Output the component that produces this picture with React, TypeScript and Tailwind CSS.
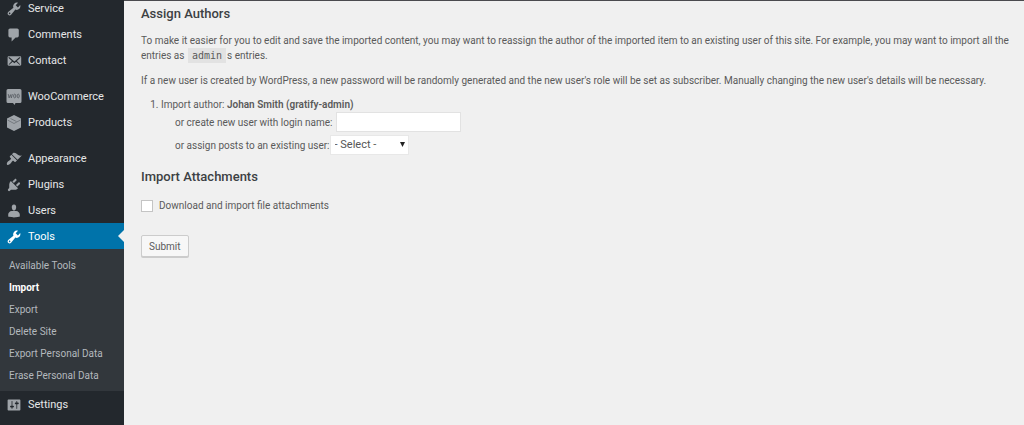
import React from 'react';

interface MenuItem {
  label: string;
  icon: React.ReactNode;
  active?: boolean;
}

const Dashicon: React.FC<{ d: string }> = ({ d }) => (
  <svg viewBox="0 0 20 20" className="size-4 shrink-0 fill-current" aria-hidden="true">
    <path d={d} />
  </svg>
);

const TOOLS =
  'M16.68 9.77c-1.34 1.34-3.3 1.67-4.95.99l-5.41 6.52c-.99.99-2.59.99-3.58 0s-.99-2.59 0-3.57l6.52-5.42c-.68-1.65-.35-3.61.99-4.95 1.28-1.28 3.12-1.62 4.72-1.06l-2.89 2.89 2.82 2.82 2.86-2.87c.53 1.58.18 3.39-1.08 4.65zM3.81 16.21c.4.39 1.04.39 1.43 0 .4-.4.4-1.04 0-1.43-.39-.4-1.03-.4-1.43 0-.39.39-.39 1.03 0 1.43z';
const COMMENTS =
  'M5 2h9c1.1 0 2 .9 2 2v7c0 1.1-.9 2-2 2h-2l-5 5v-5H5c-1.1 0-2-.9-2-2V4c0-1.1.9-2 2-2z';
const EMAIL =
  'M19 14.5v-9c0-.83-.67-1.5-1.5-1.5H3.49c-.83 0-1.5.67-1.5 1.5v9c0 .83.67 1.5 1.5 1.5H17.5c.83 0 1.5-.67 1.5-1.5zm-1.31-9.11c.33.33.15.67-.03.84L13.6 9.95l3.9 4.06c.12.14.2.36.06.51-.13.16-.43.15-.56.05l-4.37-3.73-2.14 1.95-2.13-1.95-4.37 3.73c-.13.1-.43.11-.56-.05-.14-.15-.06-.37.06-.51l3.9-4.06-4.06-3.72c-.18-.17-.36-.51-.03-.84s.67-.17.95.07l6.24 5.04 6.25-5.04c.28-.24.62-.4.95-.07z';
const APPEARANCE =
  'M14.48 11.06L7.41 3.99l1.5-1.5c.5-.56 2.3-.47 3.51.32 1.21.8 1.43 1.28 2.91 2.1 1.18.64 2.45 1.26 4.45.85zm-.71.71L6.7 4.7 4.93 6.47c-.39.39-.39 1.02 0 1.41l1.06 1.06c.39.39.39 1.03 0 1.42-.6.6-1.43 1.11-2.21 1.69-.35.26-.7.53-1.01.84C1.43 14.23.4 16.08 1.4 17.07c.99 1 2.84-.03 4.18-1.36.31-.31.58-.66.85-1.02.57-.78 1.08-1.61 1.69-2.21.39-.39 1.02-.39 1.41 0l1.06 1.06c.39.39 1.02.39 1.41 0z';
const PLUGINS =
  'M13.11 4.36L9.87 7.6 8 5.73l3.24-3.24c.35-.34 1.05-.2 1.56.32.52.51.66 1.21.31 1.55zm-8 1.77l.91-1.12 9.01 9.01-1.19.84c-.71.71-2.63 1.16-3.82 1.16H6.14L4.9 17.26c-.59.59-1.54.59-2.12 0-.59-.58-.59-1.53 0-2.12l1.24-1.24v-3.88c0-1.13.4-3.19 1.09-3.89zm7.26 3.97l3.24-3.24c.34-.35 1.04-.21 1.55.31.52.51.66 1.21.31 1.55l-3.24 3.25z';
const USERS =
  'M10 9.25c-2.27 0-2.73-3.44-2.73-3.44C7 4.02 7.82 2 9.97 2c2.16 0 2.98 2.02 2.71 3.81 0 0-.41 3.44-2.68 3.44zM7.2 10h5.500c2.4 0 4.540 2.330 4.540 4.530v2.490s-3.650 1.130-7.240 1.130c-3.650 0-7.240-1.130-7.240-1.130v-2.490C2.760 12.280 4.700 10 7.200 10z';
const SETTINGS =
  'M18 16V4c0-.55-.45-1-1-1H3c-.55 0-1 .45-1 1v12c0 .55.45 1 1 1h14c.55 0 1-.45 1-1zM8 11h1c.55 0 1 .45 1 1s-.45 1-1 1H8v1.5c0 .28-.22.5-.5.5s-.5-.22-.5-.5V13H6c-.55 0-1-.45-1-1s.45-1 1-1h1V5.5c0-.28.22-.5.5-.5s.5.22.5.5V11zm5-2h-1c-.55 0-1-.45-1-1s.45-1 1-1h1V5.5c0-.28.22-.5.5-.5s.5.22.5.5V7h1c.55 0 1 .45 1 1s-.45 1-1 1h-1v5.5c0 .28-.22.5-.5.5s-.5-.22-.5-.5V9z';

const WooIcon = () => (
  <svg viewBox="0 0 16 16" className="size-4 shrink-0" aria-hidden="true">
    <path d="M2 0h12a1.5 1.5 0 0 1 1.5 1.5v11A1.5 1.5 0 0 1 14 14H9.5l-1 2L7 14H2A1.5 1.5 0 0 1 .5 12.5v-11A1.5 1.5 0 0 1 2 0z" fill="currentColor" />
    <path d="M2.2 5l.9 4 1.4-3.3.9 3.3.9-4" fill="none" stroke="#5b6066" strokeWidth="0.9" />
    <ellipse cx="8.7" cy="7" rx="1.1" ry="1.9" fill="none" stroke="#5b6066" strokeWidth="0.9" />
    <ellipse cx="12.2" cy="7" rx="1.1" ry="1.9" fill="none" stroke="#5b6066" strokeWidth="0.9" />
  </svg>
);

const ProductsIcon = () => (
  <svg viewBox="0 0 16 16" className="size-4 shrink-0" aria-hidden="true">
    <path d="M8 0l7 3.5v9L8 16l-7-3.5v-9z" fill="currentColor" />
    <path d="M1.5 5L8 8.5 14.5 5M4.5 3.5l6 3" fill="none" stroke="#6a6f75" strokeWidth="0.8" />
  </svg>
);

const menuGroups: MenuItem[][] = [
  [
    { label: 'Service', icon: <Dashicon d={TOOLS} /> },
    { label: 'Comments', icon: <Dashicon d={COMMENTS} /> },
    { label: 'Contact', icon: <Dashicon d={EMAIL} /> },
  ],
  [
    { label: 'WooCommerce', icon: <WooIcon /> },
    { label: 'Products', icon: <ProductsIcon /> },
  ],
  [
    { label: 'Appearance', icon: <Dashicon d={APPEARANCE} /> },
    { label: 'Plugins', icon: <Dashicon d={PLUGINS} /> },
    { label: 'Users', icon: <Dashicon d={USERS} /> },
    { label: 'Tools', icon: <Dashicon d={TOOLS} />, active: true },
  ],
];

const toolsSubmenu = [
  'Available Tools',
  'Import',
  'Export',
  'Delete Site',
  'Export Personal Data',
  'Erase Personal Data',
];

const MenuLink: React.FC<MenuItem> = ({ label, icon, active }) => (
  <a
    href="#"
    className={`relative flex h-[26px] items-center gap-1.5 pt-0.5 pl-1.5 text-[11px] ${
      active ? 'bg-[#0073aa] text-white' : 'text-[#e6e7e8]'
    }`}
  >
    <span className={active ? 'text-white' : 'text-[#9fa4a9]'}>{icon}</span>
    {label}
    {active && (
      <span className="absolute top-[7px] right-0 border-y-6 border-r-6 border-y-transparent border-r-[#f0f0f0]" />
    )}
  </a>
);

const Sidebar = () => (
  <nav className="flex w-[124px] shrink-0 flex-col bg-[#23282d]">
    <div className="-mt-[5px] flex flex-col gap-2.5">
      {menuGroups.map((group) => (
        <div key={group[0].label}>
          {group.map((item) => (
            <MenuLink key={item.label} {...item} />
          ))}
        </div>
      ))}
    </div>
    <ul className="bg-[#32373c] py-[5px]">
      {toolsSubmenu.map((label) => (
        <li key={label}>
          <a
            href="#"
            className={`flex h-[22px] items-center pl-[9px] text-[10px] ${
              label === 'Import' ? 'font-bold text-white' : 'text-[#b4b9be]'
            }`}
          >
            {label}
          </a>
        </li>
      ))}
    </ul>
    <MenuLink label="Settings" icon={<Dashicon d={SETTINGS} />} />
  </nav>
);

const App: React.FC = () => {
  return (
    <div className="flex min-h-screen overflow-hidden bg-[#f0f0f0] font-[Roboto,sans-serif] text-[10px] text-[#5a5a5a]">
      <Sidebar />
      <main className="min-w-0 flex-1 border-t border-[#4a4a4e] pt-1 pr-1 pl-[17px]">
        <form onSubmit={(e) => e.preventDefault()}>
          <h2 className="text-[13px] leading-[18px] font-medium text-[#3c4043]">Assign Authors</h2>
          <p className="mt-2.5 leading-[15px]">
            To make it easier for you to edit and save the imported content, you may want to reassign the author of
            the imported item to an existing user of this site. For example, you may want to import all the entries
            as{' '}
            <code className="mx-px bg-[#e2e2e2] px-1 py-0.5 font-['DejaVu_Sans_Mono',monospace]">admin</code>s
            entries.
          </p>
          <p className="mt-2.5 leading-[15px]">
            If a new user is created by WordPress, a new password will be randomly generated and the new user&#39;s
            role will be set as subscriber. Manually changing the new user&#39;s details will be necessary.
          </p>

          <ol className="mt-[9px] list-decimal pl-5">
            <li className="leading-[15px]">
              Import author: <strong className="font-semibold">Johan Smith (gratify-admin)</strong>
              <div className="flex items-center gap-1 pl-3.5">
                <label htmlFor="new-user">or create new user with login name:</label>
                <input
                  id="new-user"
                  type="text"
                  className="h-5 w-[125px] border border-[#e2e2e2] bg-white px-1"
                />
              </div>
              <div className="mt-[3px] flex items-center pl-3.5">
                <label htmlFor="existing-user">or assign posts to an existing user:</label>
                <div className="relative">
                  <select
                    id="existing-user"
                    className="h-5 w-[79px] appearance-none border border-[#e8e8e8] bg-white pl-1 text-[11px] leading-[18px] text-[#555]"
                  >
                    <option>- Select -</option>
                  </select>
                  <svg
                    viewBox="0 0 6 6"
                    className="pointer-events-none absolute top-[7px] right-1 size-[5px] fill-[#222]"
                    aria-hidden="true"
                  >
                    <path d="M0 0h6L3 6z" />
                  </svg>
                </div>
              </div>
            </li>
          </ol>

          <h2 className="mt-[13px] text-[13px] leading-[18px] font-medium text-[#3c4043]">Import Attachments</h2>
          <div className="mt-3 flex items-center gap-1.5">
            <input
              id="attachments"
              type="checkbox"
              className="size-3 appearance-none border border-[#c4c4c4] bg-white"
            />
            <label htmlFor="attachments" className="leading-[15px]">
              Download and import file attachments
            </label>
          </div>

          <button
            type="submit"
            className="mt-[22px] h-[22px] rounded-xs border border-[#ccc] bg-[#f7f7f7] px-[7px] shadow-[0_1px_0_#ccc]"
          >
            Submit
          </button>
        </form>
      </main>
    </div>
  );
};

export default App;
